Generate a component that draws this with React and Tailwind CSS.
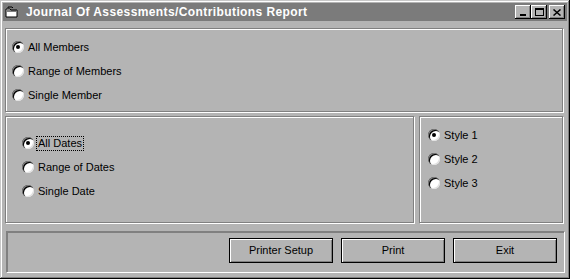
import React from "react";

const font = { fontFamily: '"Liberation Sans", Arial, sans-serif' };

function Radio({ label, checked, focus }) {
  return (
    <div className="flex items-center h-[24px]">
      <span className="relative w-[12px] h-[12px] rounded-full bg-white shadow-[inset_1px_1px_#808080,inset_2px_2px_#000,inset_-1px_-1px_#e0e0e0] flex items-center justify-center">
        {checked && <span className="w-[4px] h-[4px] rounded-full bg-black" />}
      </span>
      <span
        className={
          "ml-[2px] text-[11px] text-black leading-[13px] px-[1px] " +
          (focus ? "border border-dotted border-black" : "border border-transparent")
        }
      >
        {label}
      </span>
    </div>
  );
}

function Button({ children }) {
  return (
    <button className="w-[104px] h-[25px] border border-black bg-[#b4b4b4] shadow-[inset_1px_1px_#fff,inset_-1px_-1px_#808080] text-[11px] text-black">
      {children}
    </button>
  );
}

function TitleBtn({ children }) {
  return (
    <div className="w-[16px] h-[14px] bg-[#b4b4b4] shadow-[inset_-1px_-1px_#000,inset_1px_1px_#fff,inset_-2px_-2px_#808080] flex items-center justify-center">
      {children}
    </div>
  );
}

function TitleBar() {
  return (
    <div className="h-[18px] bg-[#7b7b7b] flex items-center pl-[2px] pr-[2px]">
      {/* window icon */}
      <svg width="14" height="13" viewBox="0 0 14 13" className="mr-[7px]">
        <path d="M1 3 L1 11 L12 11 L12 4 L6 4 L5 3 Z" fill="#fff" stroke="#000" strokeWidth="1" />
        <path d="M3 2 L3 1 L7 1 L8 2" fill="none" stroke="#000" strokeWidth="1" />
        <path d="M2 5 L11 5" stroke="#000" strokeWidth="1" />
      </svg>
      <span className="text-white font-bold text-[12px] tracking-[0.4px]">
        Journal Of Assessments/Contributions Report
      </span>
      <div className="ml-auto flex items-center">
        <TitleBtn>
          <span className="w-[6px] h-[2px] bg-black mt-[6px] -ml-[1px]" />
        </TitleBtn>
        <TitleBtn>
          <span className="w-[9px] h-[8px] border border-black border-t-2" />
        </TitleBtn>
        <div className="w-[2px]" />
        <TitleBtn>
          <svg width="8" height="7" viewBox="0 0 8 7">
            <path d="M0.5 0.5 L7.5 6.5 M7.5 0.5 L0.5 6.5" stroke="#000" strokeWidth="1.5" />
          </svg>
        </TitleBtn>
      </div>
    </div>
  );
}

export default function App() {
  return (
    <div
      className="w-[570px] h-[279px] bg-[#b4b4b4] p-[3px] shadow-[inset_-1px_-1px_#000,inset_1px_1px_#c8c8c8,inset_-2px_-2px_#808080,inset_2px_2px_#fff]"
      style={font}
    >
      <TitleBar />

      {/* member choice */}
      <div className="mt-[7px] ml-[2px] w-[558px] h-[84px] border border-[#808080] shadow-[inset_1px_1px_#fff,1px_1px_#fff] pl-[6px] pt-[6px]">
        <Radio label="All Members" checked />
        <Radio label="Range of Members" />
        <Radio label="Single Member" />
      </div>

      <div className="flex mt-[4px] ml-[2px]">
        {/* date choice */}
        <div className="w-[409px] h-[107px] border border-[#808080] shadow-[inset_1px_1px_#fff,1px_1px_#fff] pl-[16px] pt-[14px]">
          <Radio label="All Dates" checked focus />
          <Radio label="Range of Dates" />
          <Radio label="Single Date" />
        </div>
        {/* style choice */}
        <div className="ml-[5px] w-[144px] h-[107px] border border-[#808080] shadow-[inset_1px_1px_#fff,1px_1px_#fff] pl-[8px] pt-[6px]">
          <Radio label="Style 1" checked />
          <Radio label="Style 2" />
          <Radio label="Style 3" />
        </div>
      </div>

      {/* buttons */}
      <div className="mt-[8px] ml-[3px] w-[558px] h-[41px] border-t-2 border-l-2 border-[#808080] shadow-[1px_1px_#fff] flex items-start justify-end gap-[8px] pt-[5px] pr-[7px]">
        <Button>Printer Setup</Button>
        <Button>Print</Button>
        <Button>Exit</Button>
      </div>
    </div>
  );
}
